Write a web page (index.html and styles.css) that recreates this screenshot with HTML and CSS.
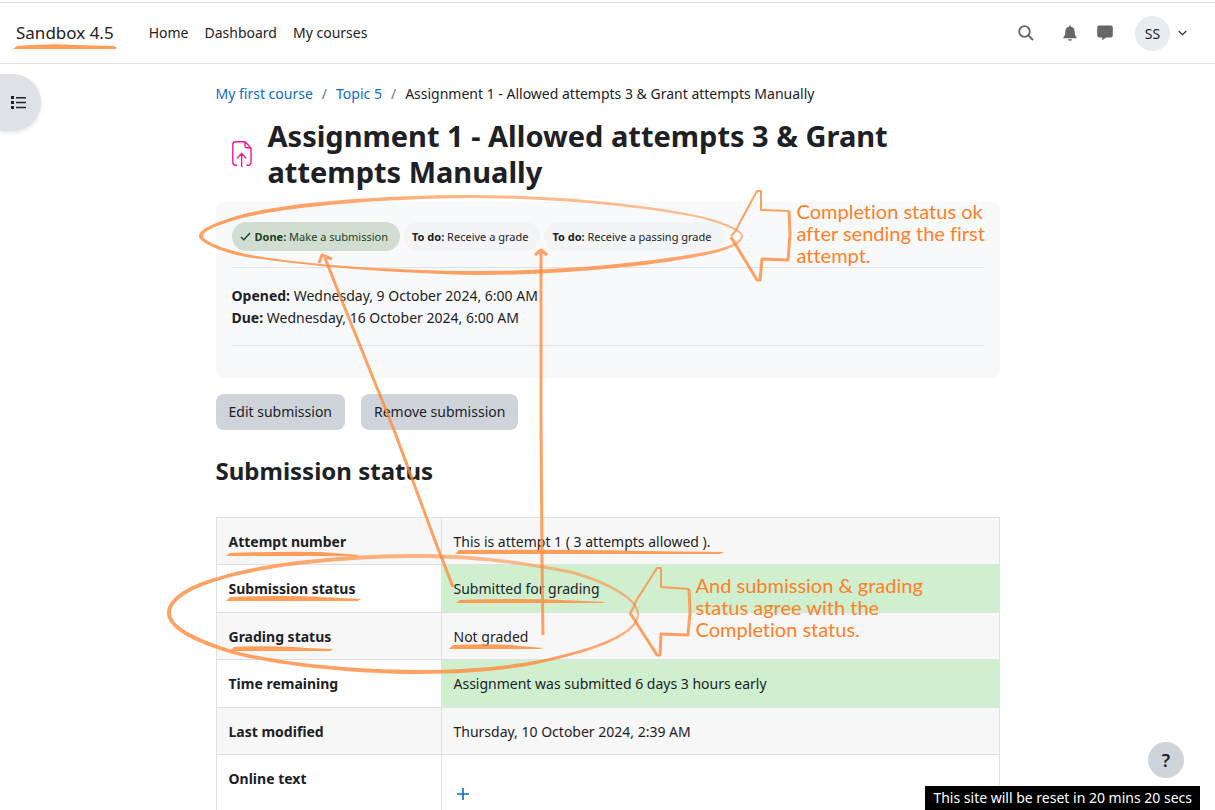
FILE: index.html
```
<!DOCTYPE html>
<html lang="en">
<head>
    <meta charset="UTF-8">
    <meta name="viewport" content="width=device-width, initial-scale=1.0">
    <title>Assignment 1 | Sandbox 4.5</title>
    <link rel="stylesheet" href="styles.css">
</head>
<body>

<div class="page">
    <header class="navbar">
        <a class="brand" href="#">Sandbox 4.5
            <svg class="brand-mark" viewBox="0 0 104 6" aria-hidden="true"><path class="brush" d="M0 5 L4 2 Q40 -1 62 1 L101 2 L104 4 L102 5 Z"/></svg>
        </a>
        <nav class="menu">
            <a href="#">Home</a>
            <a href="#">Dashboard</a>
            <a href="#">My courses</a>
        </nav>
        <div class="tools">
            <button class="icon-btn search-btn" aria-label="Search">
                <svg width="16" height="16" viewBox="0 0 16 16"><circle cx="6.5" cy="6.5" r="5.3" fill="none" stroke="#666" stroke-width="1.8"/><path d="M10.4 10.4 L15 15" stroke="#666" stroke-width="2"/></svg>
            </button>
            <button class="icon-btn bell-btn" aria-label="Notifications">
                <svg width="14" height="16" viewBox="0 0 14 16"><path fill="#666" d="M6.2 0.6h1.6v1.2c2.4.4 3.9 2.3 3.9 4.7 0 2.9.5 4.2 1.7 5.4.6.7.2 1.4-.6 1.4H1.2c-.8 0-1.2-.7-.6-1.4C1.8 10.7 2.3 9.4 2.3 6.500c0-2.400 1.500-4.300 3.900-4.700zM5 14.200h4a2 1.600 0 0 1-4 0z"/></svg>
            </button>
            <button class="icon-btn chat-btn" aria-label="Messages">
                <svg width="16" height="16" viewBox="0 0 16 16"><path fill="#666" d="M2 0.6h12a1.8 1.8 0 0 1 1.8 1.8v8.2a1.8 1.8 0 0 1-1.8 1.8H9.2L5.2 15.3v-2.9H2A1.8 1.8 0 0 1 .2 10.6V2.4A1.8 1.8 0 0 1 2 .6z"/></svg>
            </button>
            <button class="user-btn" aria-label="User menu">
                <span class="avatar">SS</span>
                <svg width="9" height="6" viewBox="0 0 9 6"><path d="M0.7 1 L4.5 4.7 L8.3 1" fill="none" stroke="#333" stroke-width="1.3"/></svg>
            </button>
        </div>
    </header>

    <button class="drawer-btn" aria-label="Open course index">
        <svg width="15" height="13" viewBox="0 0 15 13" fill="#1d2125"><path d="M0 0h3v3H0zM0 5h3v3H0zM0 10h3v3H0zM5 1h10v1.5H5zM5 5.8h10v1.5H5zM5 10.7h10v1.5H5z"/></svg>
    </button>

    <main class="main">
        <nav class="breadcrumb">
            <a href="#">My first course</a>
            <span class="slash">/</span>
            <a href="#">Topic 5</a>
            <span class="slash">/</span>
            <span>Assignment 1 - Allowed attempts 3 &amp; Grant attempts Manually</span>
        </nav>

        <div class="title">
            <svg width="20" height="26" viewBox="0 0 20 26" fill="none" stroke="#f7149a" stroke-width="1.4"><path d="M5 24.3H3.500a2.700 2.700 0 0 1-2.700-2.700V3.500A2.700 2.700 0 0 1 3.500.8H13L19 7v14.600a2.700 2.700 0 0 1-2.700 2.700H14.500M13 1v3.800c0 1.200.6 2 1.900 2H19M9.600 26V13M5 17.300 9.600 12.600 14.200 17.300"/></svg>
            <h1>Assignment 1 - Allowed attempts 3 &amp; Grant attempts Manually</h1>
        </div>

        <section class="info">
            <div class="badges">
                <span class="badge done"><svg width="11" height="9" viewBox="0 0 11 9"><path d="M1 5 L3.8 7.8 L10 1" fill="none" stroke="#1c3f1c" stroke-width="1.4"/></svg><strong>Done:</strong> Make a submission</span>
                <span class="badge"><strong>To do:</strong> Receive a grade</span>
                <span class="badge"><strong>To do:</strong> Receive a passing grade</span>
            </div>
            <div class="dates">
                <div><strong>Opened:</strong> Wednesday, 9 October 2024, 6:00 AM</div>
                <div><strong>Due:</strong> Wednesday, 16 October 2024, 6:00 AM</div>
            </div>
        </section>

        <div class="actions">
            <button class="btn">Edit submission</button>
            <button class="btn">Remove submission</button>
        </div>

        <h2>Submission status</h2>
        <table class="status">
            <tr><th scope="row">Attempt number</th><td>This is attempt 1 ( 3 attempts allowed ).</td></tr>
            <tr><th scope="row">Submission status</th><td class="ok">Submitted for grading</td></tr>
            <tr><th scope="row">Grading status</th><td>Not graded</td></tr>
            <tr><th scope="row">Time remaining</th><td class="ok">Assignment was submitted 6 days 3 hours early</td></tr>
            <tr><th scope="row">Last modified</th><td>Thursday, 10 October 2024, 2:39 AM</td></tr>
            <tr class="online">
                <th scope="row">Online text</th>
                <td><button class="plus" aria-label="Show full text"><svg width="12" height="12" viewBox="0 0 12 12"><path d="M6 0v12M0 6h12" stroke="#0f6cbf" stroke-width="1.6"/></svg></button></td>
            </tr>
        </table>

        <!-- hand drawn notes over the page -->
        <svg class="notes" viewBox="216 64 784 746" aria-hidden="true">
            <defs>
                <linearGradient id="fade" x1="0" y1="1" x2="1" y2="0">
                    <stop offset="0.5" stop-color="#ff8a3c" stop-opacity="0.8"/>
                    <stop offset="1" stop-color="#ff8a3c" stop-opacity="0.45"/>
                </linearGradient>
            </defs>
            <!-- completion ellipse -->
            <path class="ring" d="M199 236 C199 229 215 223 233 217 C275 204 370 195 470 195 C560 195 650 205 700 216 C725 222 743 230 743 236 C743 243 730 249 715 253 C660 266 560 275 480 275 C380 274 270 262 236 255 C215 249 199 242 199 236 Z
                M203 236 C203 240 218 247 238 252 C275 262 380 271 480 271 C560 271 655 262 710 251 C728 247 741 242 741 236 C741 231 722 224 700 218 C650 208 560 198 470 198 C370 199 276 208 235 220 C218 225 203 231 203 236 Z"/>
            <!-- status ellipse -->
            <path class="ring" d="M167 613 C167 598 190 584 218 577 C260 563 340 554 417 554 C480 554 535 563 573 571 C610 582 639 598 639 614 C639 634 600 650 541 663 C510 670 470 674 417 674 C350 674 275 665 233 654 C195 643 167 629 167 613 Z
                M171 613 C171 627 198 639 235 651 C277 662 350 670 417 670 C470 670 508 666 540 660 C598 648 637 632 637 614 C637 600 608 584 572 574 C535 566 480 558 417 558 C340 558 262 567 220 580 C192 588 171 600 171 613 Z"/>
            <!-- block arrows -->
            <path class="stroke thin" d="M731 236 Q736 232 739 224 L757 191 H761 V210 L789 211"/>
            <path class="stroke wide" d="M789 211 L790 234 L788 260 L762 259 L760 280 L757 280 L731 237"/>
            <path class="stroke thin" d="M630 613 Q634 608 636 601 L657 568 H661 V587 L689 589"/>
            <path class="stroke wide" d="M689 589 L690 612 L688 635 L661 634 L660 655 L657 655 L630 613"/>
            <!-- pointers -->
            <path class="stroke wide" d="M325 258 L340 296 L394 430 L437 546 L453 587 M319 263 L322 255 L332 259"/>
            <path class="stroke wide" d="M541 252 L541 420 L542 560 L543 635 M535 255 L541 250 L547 255"/>
            <!-- underlines -->
            <path class="brush" d="M226 556 l4 -3 Q280 551 320 552 L360 555 L356 556 Z"/>
            <path class="brush" d="M226 601 l4 -4 Q290 595 320 597 L361 599 L358 601 Z"/>
            <path class="brush" d="M230 651 l4 -4 Q280 645 305 648 L333 649 L330 651 Z"/>
            <path class="brush" d="M455 554 l4 -4 Q580 549 640 551 L724 552 L720 554 Z"/>
            <path class="brush" d="M456 603 l4 -3 Q530 598 560 600 L606 602 L602 603 Z"/>
            <path class="brush" d="M449 649 l4 -4 Q500 643 520 646 L543 648 L540 649 Z"/>
        </svg>
        <p class="note note-top">Completion status ok<br>after sending the first<br>attempt.</p>
        <p class="note note-bottom">And submission &amp; grading<br>status agree with the<br>Completion status.</p>
    </main>
</div>

<button class="help-btn" aria-label="Help">?</button>
<div class="reset">This site will be reset in 20 mins 20 secs</div>

</body>
</html>
```
FILE: styles.css
```
* {
    box-sizing: border-box;
}

body {
    margin: 0;
    font-family: "Noto Sans", "Open Sans", sans-serif;
    font-size: 14px;
    line-height: 22px;
    color: #1d2125;
    background: white;
}

button {
    font: inherit;
    color: inherit;
    border: none;
    padding: 0;
    background: none;
    cursor: pointer;
}

a {
    color: #0f6cbf;
    text-decoration: none;
}

.page {
    position: relative;
    height: 100vh;
    padding-top: 2px;
    overflow-x: hidden;
    overflow-y: auto;
    scrollbar-width: none;
}

.navbar {
    display: flex;
    align-items: center;
    height: 62px;
    padding: 0 24px 0 16px;
    border-top: 1px solid #dcdcdc;
    border-bottom: 1px solid #dee2e6;
}

.navbar a {
    color: #1d2125;
}

.brand {
    position: relative;
    font-size: 17px;
    margin-right: 35px;
}

.brand-mark {
    position: absolute;
    left: -3px;
    top: 22px;
    width: 104px;
    height: 6px;
}

.menu {
    display: flex;
    gap: 16px;
}

.tools {
    display: flex;
    align-items: center;
    margin-left: auto;
}

.icon-btn {
    display: flex;
}

.search-btn { margin-right: 29px; }
.bell-btn { margin-right: 20px; }
.chat-btn { margin-right: 22px; }

.user-btn {
    display: flex;
    align-items: center;
    gap: 8px;
    margin-right: 4px;
}

.avatar {
    width: 35px;
    height: 35px;
    line-height: 35px;
    border-radius: 50%;
    background: #e9ecef;
    text-align: center;
}

.drawer-btn {
    position: absolute;
    left: 0;
    top: 74px;
    width: 41px;
    height: 57px;
    padding: 0 15px 0 11px;
    border-radius: 0 29px 29px 0;
    background: #dee2e6;
    box-shadow: 0 2px 4px rgba(0, 0, 0, 0.1);
}

.drawer-btn svg {
    display: block;
}

.main {
    position: relative;
    max-width: 784px;
    margin: 0 auto;
    padding-top: 19px;
}

.breadcrumb {
    display: flex;
    gap: 9px;
}

.slash {
    color: #6a737b;
}

.title {
    display: flex;
    align-items: center;
    gap: 16px;
    padding: 13px 16px 12px;
}

.title svg {
    flex: none;
}

h1 {
    margin: 0;
    font-size: 29px;
    line-height: 36px;
    font-weight: 700;
}

h2 {
    margin: 24px 0 29px;
    font-size: 24px;
    line-height: 34px;
    font-weight: 700;
}

.info {
    padding: 20px 16px 32px;
    border-radius: 8px;
    background: #f8f9fb;
}

.badges {
    display: flex;
    gap: 4px;
    padding-bottom: 16px;
    border-bottom: 1px solid #dee2e6;
}

.badge {
    padding: 0 12px 0 8px;
    border-radius: 15px;
    background: #f2f4f5;
    font-size: 11px;
    line-height: 29px;
    white-space: nowrap;
}

.done {
    background: #d1ddd1;
    color: #1c3f1c;
}

.done svg {
    margin-right: 4px;
}

.dates {
    padding: 17px 0 16px;
    border-bottom: 1px solid #dee2e6;
}

.actions {
    display: flex;
    gap: 16px;
    margin-top: 16px;
}

.btn {
    height: 36px;
    padding: 0 13px;
    border-radius: 8px;
    background: #ced4da;
}

.status {
    width: 100%;
    border-collapse: collapse;
}

.status th,
.status td {
    height: 47px;
    padding: 13px 12px 11px;
    border: 1px solid #dee2e6;
    text-align: left;
    vertical-align: top;
}

.status th {
    width: 225px;
}

.status tr:nth-child(odd) {
    background: #f7f7f7;
}

.status .ok {
    height: 48px;
    background: #cfefcf;
}

.online .plus {
    display: block;
    margin: 16px 3px 40px;
}

.notes {
    position: absolute;
    left: 0;
    top: 0;
    width: 784px;
    height: 746px;
    overflow: visible;
    pointer-events: none;
}

.ring {
    fill: url(#fade);
    fill-rule: evenodd;
}

.brush {
    fill: #ff9248;
    opacity: 0.9;
}

.stroke {
    fill: none;
    stroke: #ff8a3c;
    stroke-linejoin: round;
    stroke-opacity: 0.8;
}

.thin { stroke-width: 2; }
.wide { stroke-width: 3; }

.note {
    position: absolute;
    margin: 0;
    font-family: Lato, sans-serif;
    font-size: 20px;
    font-weight: 400;
    font-variant-ligatures: none;
    line-height: 22px;
    color: #ff7f27;
    white-space: nowrap;
}

.note-top {
    left: 581px;
    top: 136px;
}

.note-bottom {
    left: 480px;
    top: 510px;
}

.help-btn {
    position: fixed;
    right: 31px;
    bottom: 32px;
    width: 36px;
    height: 36px;
    border-radius: 50%;
    background: #ced4da;
    font-size: 18px;
    font-weight: 600;
}

.reset {
    position: fixed;
    right: 15px;
    bottom: 0;
    padding: 1px 8px;
    background: black;
    color: white;
}
```
